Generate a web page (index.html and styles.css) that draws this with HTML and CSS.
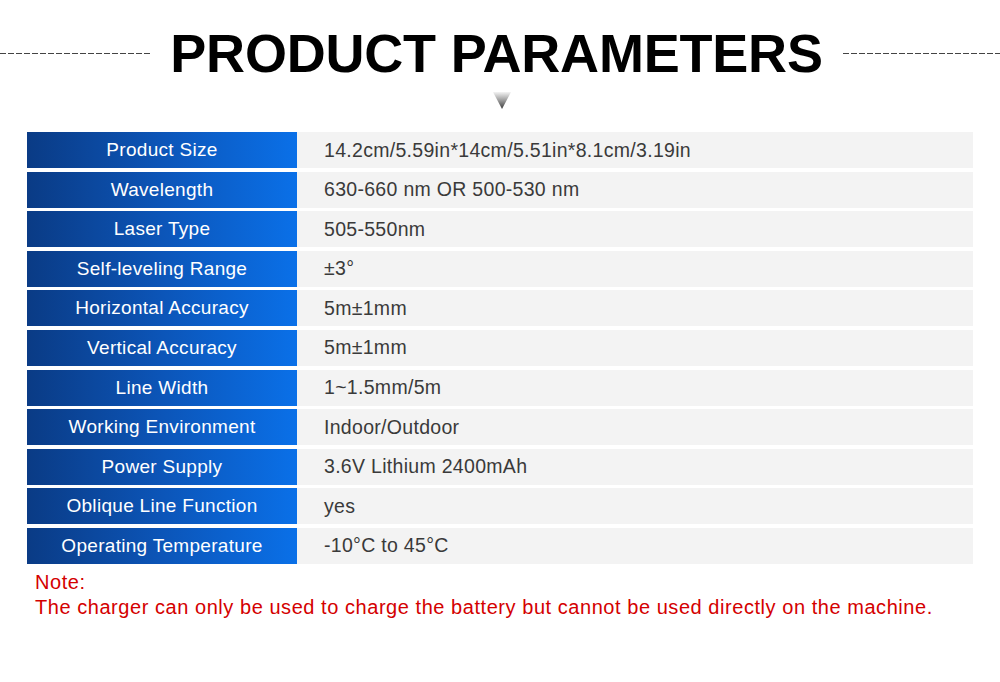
FILE: index.html
```html
<!DOCTYPE html>
<html lang="en">
<head>
<meta charset="utf-8">
<title>Product Parameters</title>
<link rel="stylesheet" href="styles.css">
</head>
<body>
<header class="head">
  <span class="dash dash-left"></span>
  <h1 class="title">PRODUCT PARAMETERS</h1>
  <span class="dash dash-right"></span>
</header>
<div class="arrow-wrap">
  <svg class="arrow" width="18" height="18" viewBox="0 0 18 18">
    <defs>
      <linearGradient id="ag" x1="0" y1="0" x2="0" y2="1">
        <stop offset="0" stop-color="#f4f4f4"/>
        <stop offset="0.5" stop-color="#9a9a9a"/>
        <stop offset="1" stop-color="#3a3a3a"/>
      </linearGradient>
    </defs>
    <polygon points="0,0 18,0 9,17" fill="url(#ag)"/>
  </svg>
</div>
<div class="table">
  <div class="key">Product Size</div><div class="val">14.2cm/5.59in*14cm/5.51in*8.1cm/3.19in</div>
  <div class="key">Wavelength</div><div class="val">630-660 nm OR 500-530 nm</div>
  <div class="key">Laser Type</div><div class="val">505-550nm</div>
  <div class="key">Self-leveling Range</div><div class="val">±3°</div>
  <div class="key">Horizontal Accuracy</div><div class="val">5m±1mm</div>
  <div class="key">Vertical Accuracy</div><div class="val">5m±1mm</div>
  <div class="key">Line Width</div><div class="val">1~1.5mm/5m</div>
  <div class="key">Working Environment</div><div class="val">Indoor/Outdoor</div>
  <div class="key">Power Supply</div><div class="val">3.6V Lithium 2400mAh</div>
  <div class="key">Oblique Line Function</div><div class="val">yes</div>
  <div class="key">Operating Temperature</div><div class="val">-10°C to 45°C</div>
</div>
<div class="note">
  <p>Note:</p>
  <p>The charger can only be used to charge the battery but cannot be used directly on the machine.</p>
</div>
</body>
</html>
```
FILE: styles.css
```css
* { box-sizing: border-box; }
html, body { margin: 0; padding: 0; background: #fff; }
body {
  font-family: "Liberation Sans", Arial, sans-serif;
  width: 1000px;
  height: 682px;
  overflow: hidden;
}
.head {
  display: flex;
  align-items: center;
  justify-content: space-between;
  margin-top: 26px;
  height: 54px;
}
.dash {
  display: block;
  height: 1px;
  background-image: linear-gradient(to right, #444 0, #444 6px, transparent 6px, transparent 8px);
  background-size: 8px 1px;
  background-repeat: repeat-x;
}
.dash-left { width: 150px; }
.dash-right { width: 157px; }
.title {
  margin: 0;
  font-size: 54px;
  line-height: 54px;
  font-weight: bold;
  color: #000;
  letter-spacing: -0.2px;
  white-space: nowrap;
}
.arrow-wrap {
  display: flex;
  justify-content: center;
  margin-top: 12px;
  padding-left: 3px;
  height: 18px;
}
.arrow { display: block; }
.table {
  display: grid;
  grid-template-columns: 270px 676px;
  grid-auto-rows: 36px;
  row-gap: 3.6px;
  margin: 22px 0 0 27px;
}
.key {
  background: linear-gradient(to right, #0a3b85 0%, #0c55b8 50%, #0a70e8 100%);
  color: #fff;
  font-size: 19px;
  letter-spacing: 0.3px;
  display: flex;
  align-items: center;
  justify-content: center;
  white-space: nowrap;
}
.val {
  background: #f3f3f3;
  color: #3a3a3a;
  font-size: 19.5px;
  letter-spacing: 0.3px;
  display: flex;
  align-items: center;
  padding-left: 27px;
  white-space: nowrap;
}
.note {
  margin: 6px 0 0 35px;
  color: #d40000;
  font-size: 20px;
  line-height: 25px;
  letter-spacing: 0.55px;
}
.note p { margin: 0; }
```
